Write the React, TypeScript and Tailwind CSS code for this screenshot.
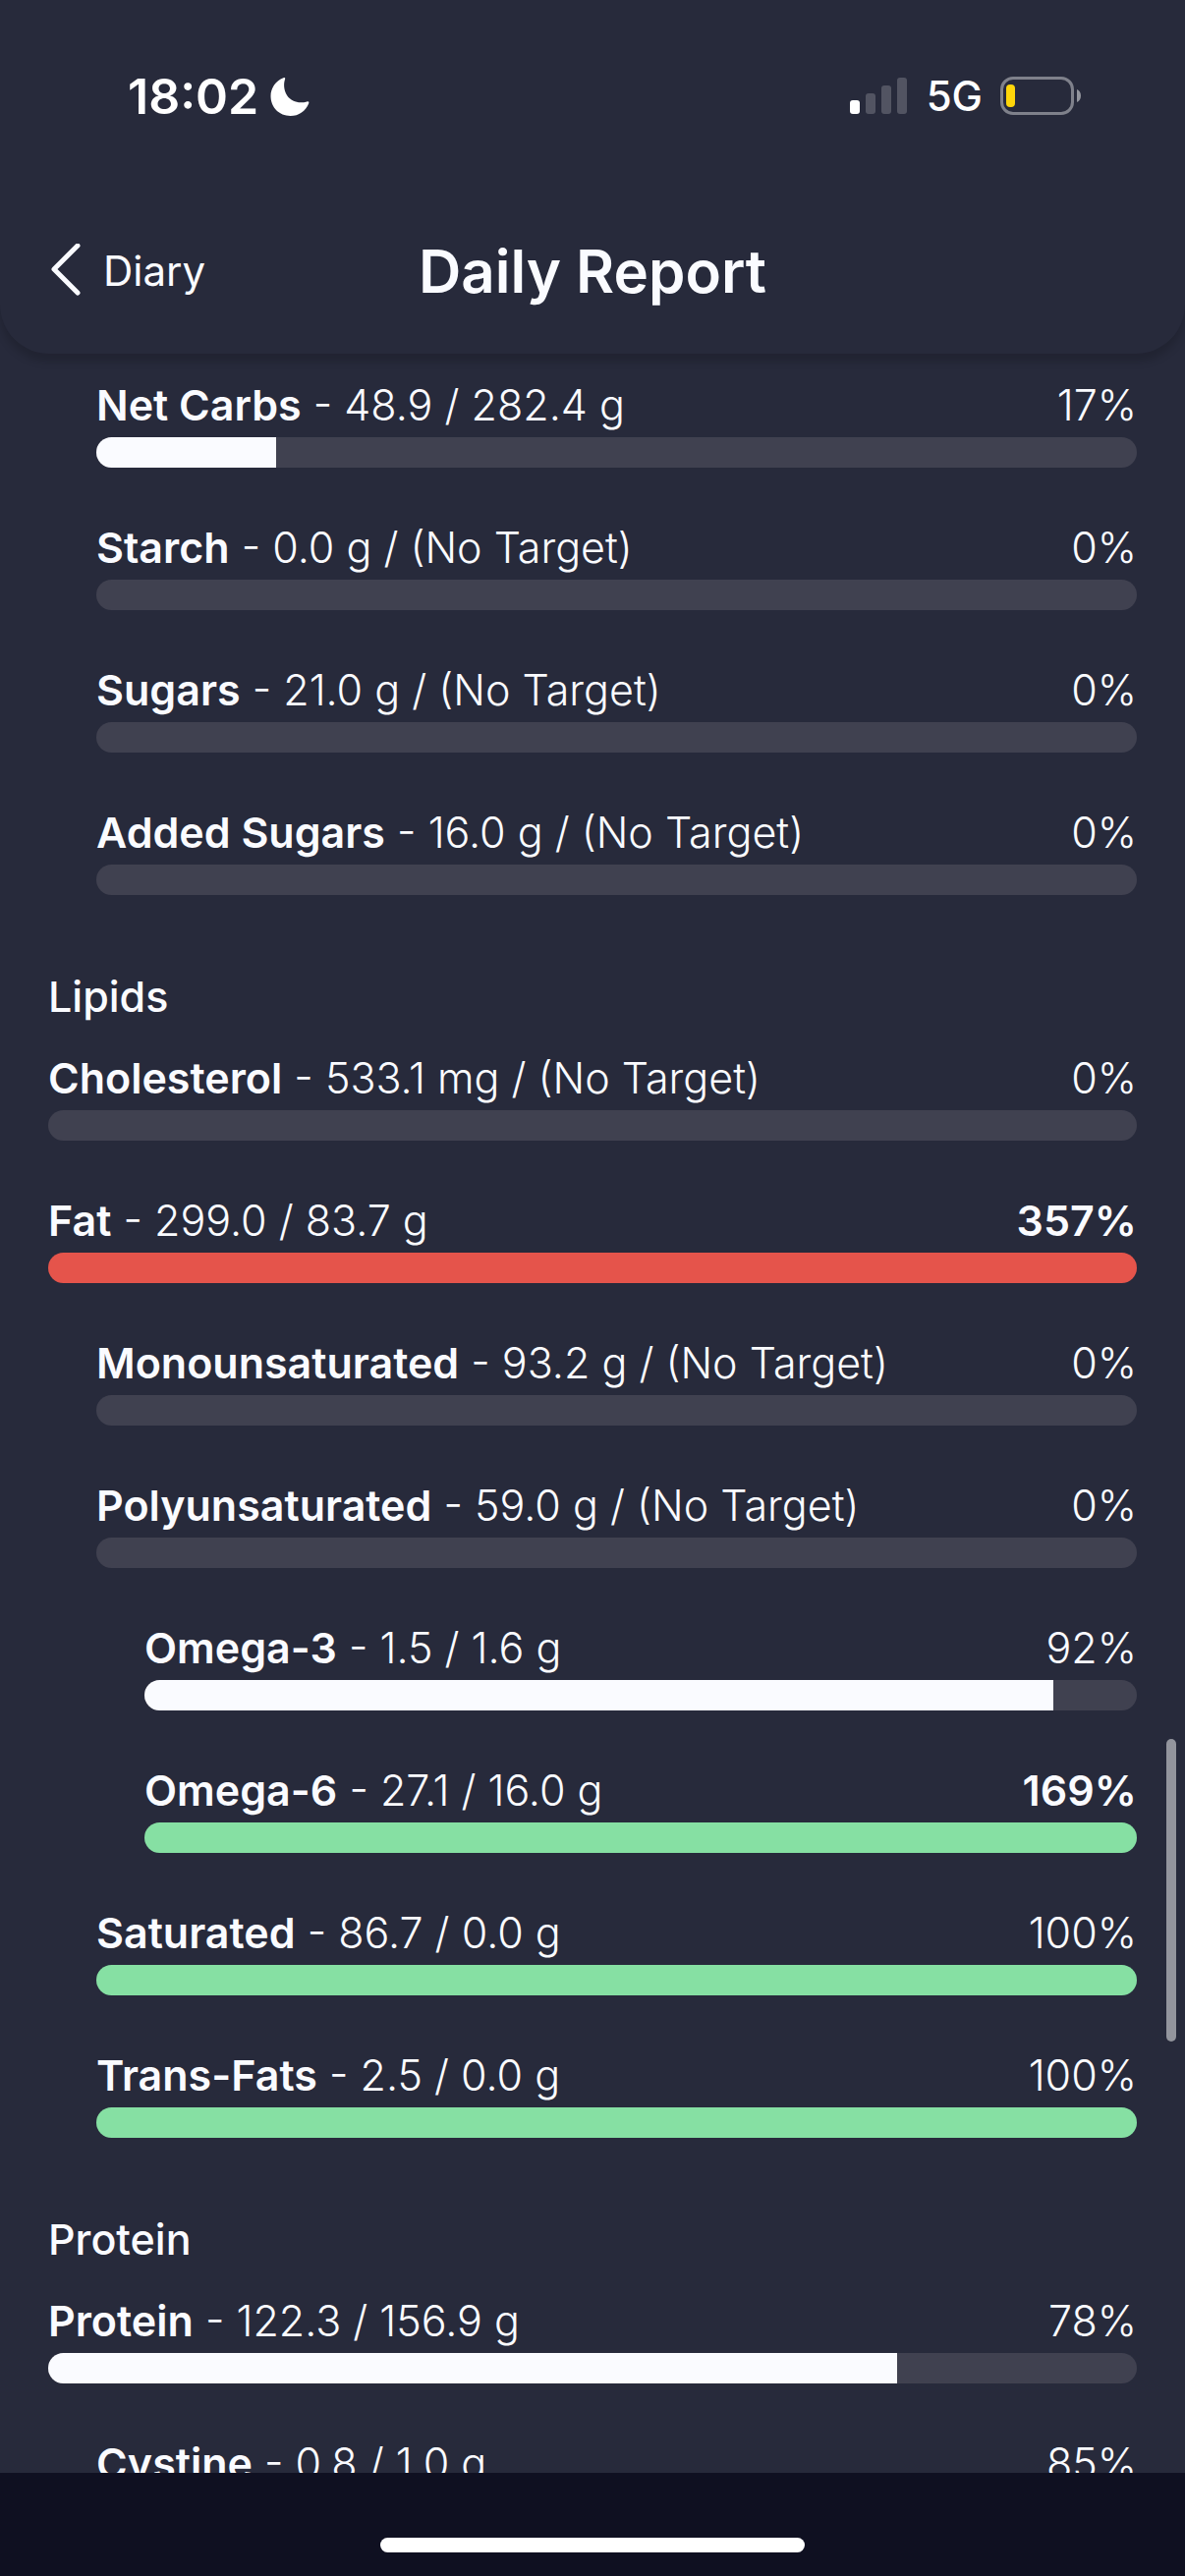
type Tone = "white" | "red" | "green";

type Nutrient = {
  name: string;
  amount: string;
  percent: number;
  fill: number;
  level?: 0 | 1 | 2;
  tone?: Tone;
  over?: boolean;
};

type Group = { title?: string; items: Nutrient[] };

const groups: Group[] = [
  {
    items: [
      { name: "Net Carbs", amount: "48.9 / 282.4 g", percent: 17, fill: 17.3, level: 1 },
      { name: "Starch", amount: "0.0 g / (No Target)", percent: 0, fill: 0, level: 1 },
      { name: "Sugars", amount: "21.0 g / (No Target)", percent: 0, fill: 0, level: 1 },
      { name: "Added Sugars", amount: "16.0 g / (No Target)", percent: 0, fill: 0, level: 1 },
    ],
  },
  {
    title: "Lipids",
    items: [
      { name: "Cholesterol", amount: "533.1 mg / (No Target)", percent: 0, fill: 0 },
      { name: "Fat", amount: "299.0 / 83.7 g", percent: 357, fill: 100, tone: "red", over: true },
      { name: "Monounsaturated", amount: "93.2 g / (No Target)", percent: 0, fill: 0, level: 1 },
      { name: "Polyunsaturated", amount: "59.0 g / (No Target)", percent: 0, fill: 0, level: 1 },
      { name: "Omega-3", amount: "1.5 / 1.6 g", percent: 92, fill: 91.6, level: 2 },
      { name: "Omega-6", amount: "27.1 / 16.0 g", percent: 169, fill: 100, level: 2, tone: "green", over: true },
      { name: "Saturated", amount: "86.7 / 0.0 g", percent: 100, fill: 100, level: 1, tone: "green" },
      { name: "Trans-Fats", amount: "2.5 / 0.0 g", percent: 100, fill: 100, level: 1, tone: "green" },
    ],
  },
  {
    title: "Protein",
    items: [
      { name: "Protein", amount: "122.3 / 156.9 g", percent: 78, fill: 78, tone: "white" },
      { name: "Cystine", amount: "0.8 / 1.0 g", percent: 85, fill: 85, level: 1 },
    ],
  },
];

const indent = ["pl-0", "pl-[49px]", "pl-[98px]"];

const toneClass: Record<Tone, string> = {
  white: "bg-[#fafbff]",
  red: "bg-[#e5544b]",
  green: "bg-[#86e0a3]",
};

function StatusBar() {
  return (
    <div className="flex items-center justify-between pl-[130px] pr-[105px] pt-[66px] text-white">
      <div className="flex items-center gap-3">
        <span className="text-[50px] leading-[64px] font-semibold">18:02</span>
        <svg width="40" height="40" viewBox="0 0 40 40" fill="currentColor" aria-label="Do not disturb">
          <path d="M13.5 1.2C14.6.7 15.6 1.2 15.1 2.6C13.6 6.6 13.5 13.8 17.2 19.3C21.6 25.8 29.6 27.6 37.4 25.4C39 25 39.8 25.8 39.2 27.2C36.2 35 29 40 20.6 40C9.2 40 .5 31.2 .5 19.8C.5 11.5 5.6 4.3 13.5 1.2Z" />
        </svg>
      </div>
      <div className="flex items-center">
        <svg width="58" height="38" viewBox="0 0 58 38" fill="currentColor" aria-label="Signal">
          <rect x="0" y="23" width="10" height="14" rx="3" />
          <rect x="16" y="16" width="10" height="21" rx="3" opacity=".2" />
          <rect x="32" y="8" width="10" height="29" rx="3" opacity=".2" />
          <rect x="48" y="0" width="10" height="37" rx="3" opacity=".2" />
        </svg>
        <span className="ml-5 mr-[18px] text-[42px] leading-[64px] font-medium">5G</span>
        <svg width="83" height="40" viewBox="0 0 83 40" fill="none" aria-label="Battery low">
          <rect x="1.5" y="1.5" width="72" height="36" rx="11.5" stroke="#7f818b" strokeWidth="3" />
          <rect x="6" y="8" width="9" height="23" rx="4" fill="#ffd60a" />
          <path d="M78 13C80.6 14 82 16.5 82 19.5C82 22.5 80.6 25 78 26Z" fill="#93959d" />
        </svg>
      </div>
    </div>
  );
}

function Header() {
  return (
    <header className="relative z-10 rounded-b-[50px] bg-[#272a3b] pb-11 shadow-[0_8px_8px_rgba(0,0,0,0.16)]">
      <StatusBar />
      <div className="mt-[106px] grid grid-cols-[1fr_auto_1fr] items-center px-[50px]">
        <button type="button" className="flex items-center gap-[22px] justify-self-start text-[42px] leading-[80px]">
          <svg width="33" height="56" viewBox="0 0 33 56" fill="none" stroke="currentColor" strokeWidth="5" strokeLinecap="round" strokeLinejoin="round">
            <path d="M29 2L5 26L29 50" />
          </svg>
          Diary
        </button>
        <h1 className="text-[60px] leading-[80px] font-semibold">Daily Report</h1>
      </div>
    </header>
  );
}

function NutrientRow({ name, amount, percent, fill, level = 0, tone = "white", over }: Nutrient) {
  return (
    <li className={indent[level]}>
      <div className="flex justify-between text-[43px] leading-[66px] font-light">
        <p>
          <span className="font-semibold">{name}</span> - {amount}
        </p>
        <span className={over ? "font-semibold" : ""}>{percent}%</span>
      </div>
      <div
        role="progressbar"
        aria-label={name}
        aria-valuenow={percent}
        className="h-[31px] overflow-hidden rounded-full bg-[#404150]"
      >
        <div className={`h-full ${toneClass[tone]}`} style={{ width: `${fill}%` }} />
      </div>
    </li>
  );
}

export default function App() {
  return (
    <div className="flex h-screen flex-col bg-[#272a3b] font-[Inter,sans-serif] text-[#fafbff]">
      <Header />
      <main className="relative min-h-0 flex-1 overflow-hidden px-[49px] pt-[19px]">
        {groups.map((group, i) => (
          <section key={i}>
            {group.title && (
              <h2 className="mt-[70px] mb-[17px] text-[43px] leading-[66px] font-medium">{group.title}</h2>
            )}
            <ul className="flex flex-col gap-12">
              {group.items.map((item) => (
                <NutrientRow key={item.name} {...item} />
              ))}
            </ul>
          </section>
        ))}
        {/* scroll thumb */}
        <div className="absolute top-[1410px] right-[9px] h-[308px] w-[10px] rounded-full bg-[#93959d]" />
      </main>
      <footer className="flex shrink-0 justify-center bg-[#0f1021] pt-[66px] pb-6">
        <div className="h-[15px] w-[432px] rounded-full bg-white" />
      </footer>
    </div>
  );
}
